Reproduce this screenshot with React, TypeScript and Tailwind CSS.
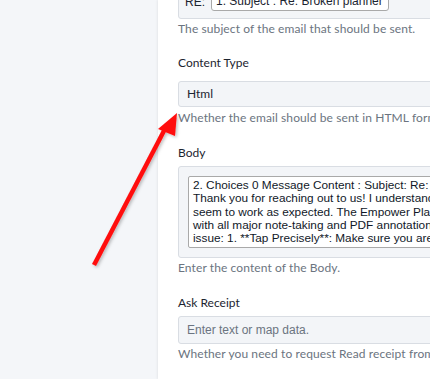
import { ReactNode } from 'react'

const sans = "font-['Lato','Open_Sans',sans-serif]"
const plain = "font-['Liberation_Sans','Arial',sans-serif]"

function Help({ children, className = '' }: { children: ReactNode; className?: string }) {
  return (
    <p className={`${sans} ${className} whitespace-nowrap text-[12px] leading-[14px] tracking-[0.1px] text-[#6b7480]`}>
      {children}
    </p>
  )
}

function Label({ children, className = '' }: { children: ReactNode; className?: string }) {
  return <div className={`${sans} ${className} text-[12px] leading-[16px] text-[#1c2430]`}>{children}</div>
}

function Arrow() {
  return (
    <svg className="pointer-events-none absolute left-0 top-0" width="430" height="379" viewBox="0 0 430 379">
      <defs>
        <filter id="sh" x="-20%" y="-20%" width="140%" height="140%">
          <feDropShadow dx="1.5" dy="1.5" stdDeviation="1.5" floodColor="#000" floodOpacity="0.25" />
        </filter>
      </defs>
      <g filter="url(#sh)">
        <line x1="94" y1="265" x2="166" y2="127" stroke="#ff0d0d" strokeWidth="4.5" strokeLinecap="butt" />
        <polygon points="177,113 158,129 175,136" fill="#ff0d0d" />
      </g>
    </svg>
  )
}

const bodyLines = [
  '2. Choices 0 Message Content : Subject: Re: Broken planner',
  "Thank you for reaching out to us! I understand that the links in your planner don't",
  'seem to work as expected. The Empower Planner is designed to be compatible',
  "with all major note-taking and PDF annotation apps. Here's how to fix the",
  'issue: 1. **Tap Precisely**: Make sure you are tapping the link',
]

export default function App() {
  return (
    <div className="relative flex h-[379px] w-[430px] overflow-hidden bg-[#f4f6f9]">
      <div className="w-[158px] shrink-0" />
      <div className="w-[320px] shrink-0 bg-white pl-[20px] shadow-[-1px_0_2px_rgba(0,0,0,0.06)]">
        {/* Subject */}
        <div className="-mt-[16px] flex h-[35px] items-start rounded-[3px] border border-[#d9dde3] bg-[#f3f5f8] pl-[6px]">
          <span className={`${plain} mt-[10px] text-[12px] leading-[14px] text-[#1c2430]`}>RE:</span>
          <div className={`${plain} ml-[6px] h-[26px] w-[178px] whitespace-nowrap rounded-[3px] border border-[#a9a9a9] bg-white px-[4px] pt-[8px] text-[12px] leading-[14px] text-[#1c2430]`}>
            1. Subject : Re: Broken planner
          </div>
        </div>
        <Help className="mt-[3px]">The subject of the email that should be sent.</Help>

        {/* Content Type */}
        <Label className="mt-[19px] mb-[10px]">Content Type</Label>
        <div className={`${sans} flex h-[26px] items-center rounded-[3px] border border-[#d9dde3] bg-[#f3f5f8] pl-[8px] text-[12px] text-[#1c2430]`}>
          Html
        </div>
        <Help className="mt-[4px]">Whether the email should be sent in HTML format or plain text.</Help>

        {/* Body */}
        <Label className="mt-[20px] mb-[5px]">Body</Label>
        <div className="h-[92px] rounded-[3px] border border-[#d9dde3] bg-[#f3f5f8] p-[9px]">
          <div className={`${plain} h-[72px] overflow-hidden rounded-[2px] border border-[#a9a9a9] bg-white px-[4px] pt-[2px] text-[11.8px] leading-[13.3px] text-[#101828]`}>
            {bodyLines.map((l) => (
              <div key={l} className="whitespace-nowrap">{l}</div>
            ))}
          </div>
        </div>
        <Help className="mt-[3px]">Enter the content of the Body.</Help>

        {/* Ask Receipt */}
        <Label className="mt-[20px] mb-[5px]">Ask Receipt</Label>
        <div className={`${plain} flex h-[28px] items-center rounded-[3px] border border-[#d9dde3] bg-[#f3f5f8] pl-[8px] text-[12px] text-[#6b7480]`}>
          Enter text or map data.
        </div>
        <Help className="mt-[3px]">Whether you need to request Read receipt from the recipient.</Help>
      </div>
      <Arrow />
    </div>
  )
}
